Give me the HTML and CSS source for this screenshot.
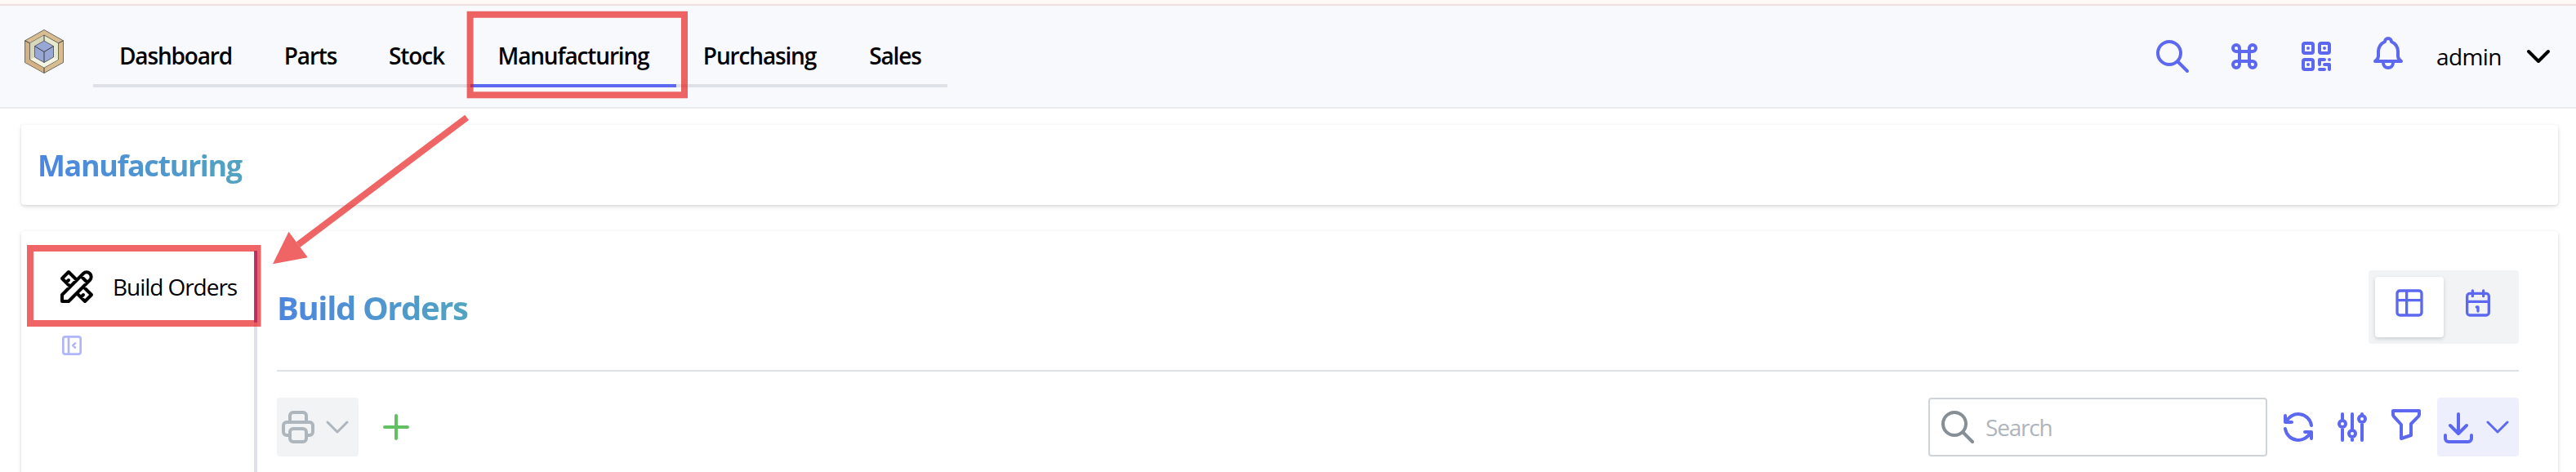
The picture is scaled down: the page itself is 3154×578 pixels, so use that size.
FILE: index.html
```
<!DOCTYPE html>
<html lang="en">
<head>
<meta charset="utf-8">
<title>Manufacturing</title>
<link rel="stylesheet" href="styles.css">
</head>
<body>
<div class="topstrip"></div>
<header class="header">
  <svg class="logo" viewBox="0 0 48 54" stroke="#3a3a3a" stroke-width="0.7" stroke-linejoin="round">
    <path fill="#d9bd92" d="M24 .5 47.5 13.8V40.5L24 53.5.5 40.5V13.8z"/>
    <path fill="#d3b182" stroke="none" d="M1 14 6.5 16.8V37L24 47v6L1 40z"/>
    <path fill="#e8ead0" d="M24 7 41.5 16.8V37L24 47 6.5 37V16.8z"/>
    <path fill="#d5d8ba" stroke="none" d="M23.500 7.500V14L12.500 20.500V34L7 37V17z"/>
    <path fill="#f3f4e4" stroke="none" d="M7.500 37 12.500 34 24 41 35.500 34 41 37 24 46.500z"/>
    <path fill="#99a7d6" d="M24 14 35.500 20.500V34L24 40.500 12.500 34V20.500z"/>
    <path fill="none" stroke-width="1" d="M12.500 20.500 24 27.500 35.500 20.500M24 27.500V40.500M24 7V14M24 47V53.500M.5 13.800 6.500 16.800M47.500 13.800 41.500 16.800"/>
  </svg>
  <nav class="tabs">
    <a class="tab t-dashboard"><span>Dashboard</span></a>
    <a class="tab t-parts"><span>Parts</span></a>
    <a class="tab t-stock"><span>Stock</span></a>
    <a class="tab t-manufacturing active"><span>Manufacturing</span></a>
    <a class="tab t-purchasing"><span>Purchasing</span></a>
    <a class="tab t-sales"><span>Sales</span></a>
  </nav>
  <div class="actions">
    <svg class="icon" viewBox="0 0 24 24"><path d="M3 10a7 7 0 1 0 14 0a7 7 0 1 0 -14 0M21 21l-6 -6"/></svg>
    <svg class="icon" viewBox="0 0 24 24"><path d="M7 9a2 2 0 1 1 2 -2v10a2 2 0 1 1 -2 -2h10a2 2 0 1 1 -2 2v-10a2 2 0 1 1 2 2h-10"/></svg>
    <svg class="icon" viewBox="0 0 24 24"><path d="M4 5a1 1 0 0 1 1 -1h4a1 1 0 0 1 1 1v4a1 1 0 0 1 -1 1h-4a1 1 0 0 1 -1 -1zM7 17v.01M14 5a1 1 0 0 1 1 -1h4a1 1 0 0 1 1 1v4a1 1 0 0 1 -1 1h-4a1 1 0 0 1 -1 -1zM7 7v.01M4 15a1 1 0 0 1 1 -1h4a1 1 0 0 1 1 1v4a1 1 0 0 1 -1 1h-4a1 1 0 0 1 -1 -1zM17 7v.01M14 14h3M20 14v.01M14 14v3M14 20h3M17 17h3M20 17v3"/></svg>
    <svg class="icon bell" viewBox="0 0 24 24"><path d="M10 5a2 2 0 1 1 4 0a7 7 0 0 1 4 6v3a4 4 0 0 0 2 3h-16a4 4 0 0 0 2 -3v-3a7 7 0 0 1 4 -6M9 17v1a3 3 0 0 0 6 0v-1"/></svg>
  </div>
  <div class="user"><span>admin</span>
    <svg class="icon black" viewBox="0 0 24 24"><path d="M6 9l6 6l6 -6"/></svg>
  </div>
</header>

<section class="card page-title"><h1 class="grad">Manufacturing</h1></section>

<main class="card panel">
  <aside class="sidebar">
    <a class="side-item"><svg class="icon black" viewBox="0 0 24 24"><path d="M3 21h4l13 -13a1.500 1.500 0 0 0 -4 -4l-13 13v4M14.500 5.500l4 4M12 8l-5 -5l-4 4l5 5M7 8l-1.500 1.500M16 12l5 5l-4 4l-5 -5M16 17l-1.500 1.500"/></svg><span>Build Orders</span></a>
    <svg class="icon collapse" viewBox="0 0 24 24"><path d="M4 6a2 2 0 0 1 2 -2h12a2 2 0 0 1 2 2v12a2 2 0 0 1 -2 2h-12a2 2 0 0 1 -2 -2zM9 4v16M15 10l-2 2l2 2"/></svg>
  </aside>
  <div class="content">
    <div class="content-head">
      <h2 class="grad">Build Orders</h2>
      <div class="segmented">
        <span class="seg on"><svg class="icon small" viewBox="0 0 24 24"><path d="M3 5a2 2 0 0 1 2 -2h14a2 2 0 0 1 2 2v14a2 2 0 0 1 -2 2h-14a2 2 0 0 1 -2 -2zM3 10h18M10 3v18"/></svg></span>
        <span class="seg"><svg class="icon small" viewBox="0 0 24 24"><path d="M4 7a2 2 0 0 1 2 -2h12a2 2 0 0 1 2 2v12a2 2 0 0 1 -2 2h-12a2 2 0 0 1 -2 -2zM16 3v4M8 3v4M4 11h16M11 15h1M12 15v3"/></svg></span>
      </div>
    </div>
    <div class="toolbar">
      <div class="btn gray">
        <svg class="icon" viewBox="0 0 24 24"><path d="M17 17h2a2 2 0 0 0 2 -2v-4a2 2 0 0 0 -2 -2h-14a2 2 0 0 0 -2 2v4a2 2 0 0 0 2 2h2M17 9v-4a2 2 0 0 0 -2 -2h-6a2 2 0 0 0 -2 2v4M7 15a2 2 0 0 1 2 -2h6a2 2 0 0 1 2 2v4a2 2 0 0 1 -2 2h-6a2 2 0 0 1 -2 -2z"/></svg>
        <svg class="icon thin" viewBox="0 0 24 24"><path d="M6 9l6 6l6 -6"/></svg>
      </div>
      <svg class="icon plus" viewBox="0 0 24 24"><path d="M12 5v14M5 12h14"/></svg>
      <div class="search">
        <svg class="icon" viewBox="0 0 24 24"><path d="M3 10a7 7 0 1 0 14 0a7 7 0 1 0 -14 0M21 21l-6 -6"/></svg>
        <span>Search</span>
      </div>
      <div class="tools">
        <svg class="icon" viewBox="0 0 24 24"><path d="M20 11a8.100 8.100 0 0 0 -15.500 -2m-.5 -4v4h4M4 13a8.100 8.100 0 0 0 15.500 2m.5 4v-4h-4"/></svg>
        <svg class="icon" viewBox="0 0 24 24"><path d="M4 10a2 2 0 1 0 4 0a2 2 0 0 0 -4 0M6 4v4M6 12v8M10 16a2 2 0 1 0 4 0a2 2 0 0 0 -4 0M12 4v10M12 18v2M16 7a2 2 0 1 0 4 0a2 2 0 0 0 -4 0M18 4v1M18 9v11"/></svg>
        <svg class="icon filter" viewBox="0 0 24 24"><path d="M4 4h16v2.172a2 2 0 0 1 -.586 1.414l-4.414 4.414v7l-6 2v-8.500l-4.480 -4.928a2 2 0 0 1 -.52 -1.345v-2.227z"/></svg>
      </div>
      <div class="btn blue">
        <svg class="icon" viewBox="0 0 24 24"><path d="M4 17v2a2 2 0 0 0 2 2h12a2 2 0 0 0 2 -2v-2M7 11l5 5l5 -5M12 4v12"/></svg>
        <svg class="icon thin" viewBox="0 0 24 24"><path d="M6 9l6 6l6 -6"/></svg>
      </div>
    </div>
  </div>
</main>

<svg class="callouts" viewBox="0 0 3154 578">
  <rect x="575.600" y="17.800" width="262.400" height="98.500"/>
  <rect x="37" y="304" width="278.500" height="92"/>
  <path d="M571.600 143.900 365.150 299.500"/>
  <path class="head" d="M334 323.300 353.500 283.700 376.800 315.300z"/>
</svg>
</body>
</html>
```
FILE: styles.css
```
* { box-sizing: border-box; }
body {
  margin: 0;
  width: 3154px;
  height: 578px;
  overflow: hidden;
  background: #fff;
  color: #000;
  font: 28px/44px "Open Sans", "Noto Sans", sans-serif;
  letter-spacing: -1.05px;
}
.topstrip { height: 7px; background: #fff9f6; border-bottom: 2px solid #f0dfe1; }
.header {
  display: flex;
  height: 126px;
  padding-left: 30px;
  background: #f8f9fc;
  border-bottom: 2px solid #e9ebee;
}
.logo { width: 48px; height: 54px; margin-top: 29px; }
.tabs { display: flex; height: 100px; margin-left: 36px; border-bottom: 4px solid #dfe1e8; }
.tab { display: flex; justify-content: center; height: 100px; padding-top: 39px; font-weight: 600; letter-spacing: -1.15px; white-space: nowrap; }
.tab.active { border-bottom: 4px solid #5c68f0; }
.t-dashboard { width: 202px; }
.t-parts { width: 128px; }
.t-stock { width: 132px; }
.t-manufacturing { width: 252px; }
.t-purchasing { width: 204px; }
.t-sales { width: 128px; }
.icon {
  display: block;
  flex: none;
  width: 48px;
  height: 48px;
  fill: none;
  stroke: #5c68f0;
  stroke-width: 2;
  stroke-linecap: round;
  stroke-linejoin: round;
}
.icon.black { stroke: #000; }
.icon.small { width: 40px; height: 40px; }
.icon.thin { stroke-width: 1.5; }
.actions { display: flex; gap: 40px; margin-left: auto; padding-top: 38px; }
.bell { margin-top: -4px; }
.user { display: flex; width: 149px; margin: 38px 22px 0 35px; justify-content: space-between; font-weight: 500; letter-spacing: -.6px; }
.user span { padding-top: 2px; }
.card { margin: 0 22px 0 26px; border-radius: 4px; background: #fff; box-shadow: 0 2px 6px rgba(0,0,0,.1), 0 1px 3px rgba(0,0,0,.1); }
.grad {
  margin: 0;
  font-weight: 700;
  letter-spacing: -1.4px;
  white-space: nowrap;
  background: linear-gradient(90deg, #4c86e0, #52a4c0);
  -webkit-background-clip: text;
  background-clip: text;
  color: transparent;
}
.page-title { display: flex; align-items: center; height: 98px; margin-top: 20px; padding: 2px 0 0 20px; }
.page-title h1 { padding-right: 2px; font-size: 36px; line-height: 50px; }
.panel { display: flex; height: 320px; margin-top: 32px; }
.sidebar { width: 289px; margin-top: 24px; border-right: 4px solid #dfe1e8; }
.side-item { display: flex; align-items: center; gap: 20px; width: 289px; height: 88px; padding-left: 44px; border-right: 4px solid #5c68f0; white-space: nowrap; }
.collapse { width: 32px; height: 32px; margin: 12px 0 0 46px; stroke: #b0b5f8; }
.content { flex: 1; padding: 48px 48px 0 24px; }
.content-head { display: flex; justify-content: space-between; height: 124px; border-bottom: 2px solid #dee2e6; }
.content-head h2 { height: 56px; margin: 18px 0 0; padding-right: 2px; font-size: 40px; line-height: 56px; }
.segmented { display: flex; width: 184px; height: 90px; padding: 8px; border-radius: 4px; background: #f1f3f5; }
.seg { display: flex; justify-content: center; width: 84px; height: 74px; padding-top: 12px; border-radius: 4px; }
.seg.on { background: #fff; box-shadow: 0 2px 5px rgba(0,0,0,.16); }
.toolbar { display: flex; align-items: center; height: 72px; margin-top: 32px; }
.btn { display: flex; align-items: center; width: 100px; height: 72px; padding-left: 2px; border-radius: 4px; }
.gray { background: #f1f3f5; }
.gray .icon { stroke: #adb5bd; }
.blue { background: #edeffd; }
.icon.plus { margin-left: 22px; stroke: #63c060; }
.search { display: flex; align-items: center; width: 415px; height: 72px; margin-left: auto; padding-left: 10px; border: 2px solid #ced4da; border-radius: 4px; color: #adb5bd; }
.search .icon { stroke: #868e96; }
.search span { margin-left: 10px; letter-spacing: -1.2px; }
.tools { display: flex; gap: 18px; margin: 0 14px; }
.filter { margin-top: -4px; }
.callouts { position: absolute; left: 0; top: 0; width: 3154px; height: 578px; fill: none; stroke: rgba(231,19,20,.66); stroke-width: 8; }
.callouts .head { fill: rgba(231,19,20,.66); stroke: none; }
```
